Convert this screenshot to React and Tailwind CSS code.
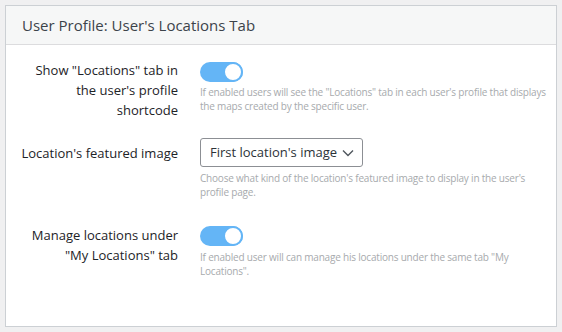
import React, { useState } from "react";

const Toggle = ({ on, onClick }) => (
  <button
    onClick={onClick}
    className={`relative block w-[43px] h-[20px] rounded-full ${on ? "bg-[#64b5f6]" : "bg-[#ccc]"}`}
  >
    <span
      className={`absolute top-0 w-[20px] h-[20px] rounded-full bg-white border-2 ${on ? "left-[23px] border-[#64b5f6]" : "left-0 border-[#ccc]"}`}
    />
  </button>
);

const Desc = ({ children }) => (
  <p className="text-[10px] leading-[14px] tracking-[-0.2px] text-[#a7aaad]">{children}</p>
);

export default function App() {
  const [showTab, setShowTab] = useState(true);
  const [manage, setManage] = useState(true);

  return (
    <div
      className="w-[562px] h-[332px] bg-[#f0f0f1] p-[5px]"
      style={{ fontFamily: '"Open Sans", "Liberation Sans", sans-serif' }}
    >
      <div className="w-[552px] h-[322px] bg-white border border-[#ccd0d4]">
        <div className="h-[39px] bg-[#f6f7f7] border-b border-[#dcdcde] px-[16px] flex items-center">
          <h2 className="text-[15px] text-[#3c434a]">User Profile: User's Locations Tab</h2>
        </div>

        <div className="pt-[15px] text-[13px] text-[#1d2327]">
          <div className="flex items-start">
            <div className="w-[172px] shrink-0 text-right leading-[20px]">
              Show "Locations" tab in<br />the user's profile<br />shortcode
            </div>
            <div className="ml-[22px] w-[350px] pt-[2px]">
              <Toggle on={showTab} onClick={() => setShowTab(!showTab)} />
              <div className="mt-[3px]">
                <Desc>If enabled users will see the "Locations" tab in each user's profile that displays the maps created by the specific user.</Desc>
              </div>
            </div>
          </div>

          <div className="flex items-start mt-[18px]">
            <div className="w-[172px] shrink-0 text-right leading-[20px] pt-[5px]">Location's featured image</div>
            <div className="ml-[22px] w-[350px]">
              <button className="h-[29px] w-[163px] border border-[#8c8f94] rounded-[3px] flex items-center justify-between pl-[9px] pr-[8px] text-[13px] text-[#2c3338]">
                <span>First location's image</span>
                <svg width="12" height="8" viewBox="0 0 12 8" fill="none">
                  <path d="M1 1.5 6 6.5 11 1.5" stroke="#50575e" strokeWidth="1.4" />
                </svg>
              </button>
              <div className="mt-[4px]">
                <Desc>Choose what kind of the location's featured image to display in the user's profile page.</Desc>
              </div>
            </div>
          </div>

          <div className="flex items-start mt-[26px]">
            <div className="w-[172px] shrink-0 text-right leading-[20px]">
              Manage locations under<br />"My Locations" tab
            </div>
            <div className="ml-[22px] w-[350px] pt-[1px]">
              <Toggle on={manage} onClick={() => setManage(!manage)} />
              <div className="mt-[4px]">
                <Desc>If enabled user will can manage his locations under the same tab "My Locations".</Desc>
              </div>
            </div>
          </div>
        </div>
      </div>
    </div>
  );
}
